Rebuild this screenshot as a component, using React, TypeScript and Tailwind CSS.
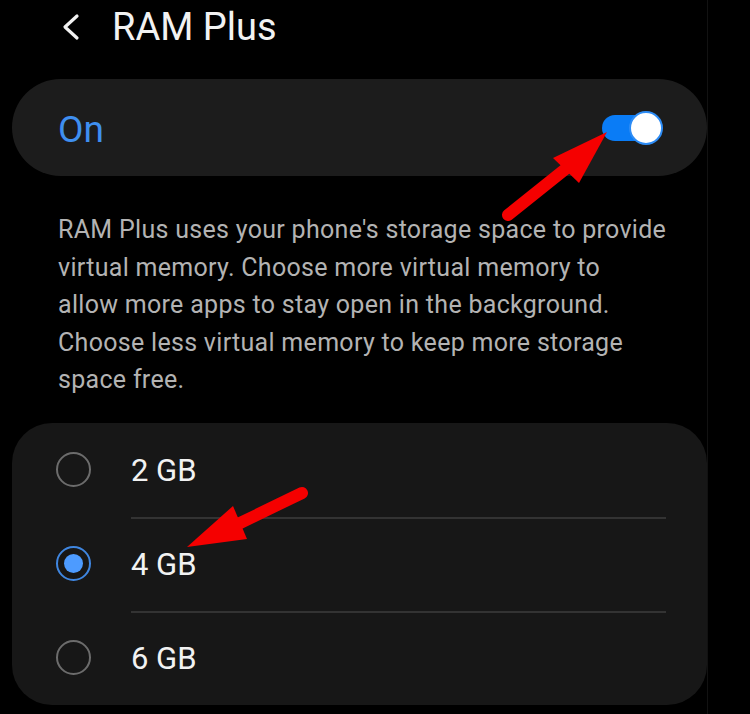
import React from "react";

const descLines = [
  "RAM Plus uses your phone's storage space to provide",
  "virtual memory. Choose more virtual memory to",
  "allow more apps to stay open in the background.",
  "Choose less virtual memory to keep more storage",
  "space free.",
];

const options = [
  { label: "2 GB", selected: false },
  { label: "4 GB", selected: true },
  { label: "6 GB", selected: false },
];

const Radio = ({ selected }: { selected: boolean }) =>
  selected ? (
    <div className="w-[35px] h-[35px] rounded-full border-2 border-[#3f86e0] flex items-center justify-center">
      <div className="w-[19px] h-[19px] rounded-full bg-[#4d9bff]" />
    </div>
  ) : (
    <div className="w-[35px] h-[35px] rounded-full border-2 border-[#6c6c6c]" />
  );

const App = () => {
  return (
    <main
      className="relative w-[750px] h-[714px] bg-black overflow-hidden"
      style={{ fontFamily: "Roboto, 'Noto Sans', sans-serif" }}
    >
      <div className="w-[708px] h-full border-r border-[#121212] pl-[12px]">
        {/* header */}
        <header className="flex items-center h-[52px] pt-[2px]">
          <svg width="20" height="28" viewBox="0 0 20 28" className="ml-[50px]">
            <path
              d="M15 3 L3 14 L15 25"
              fill="none"
              stroke="#f2f2f2"
              strokeWidth="3.2"
              strokeLinecap="round"
              strokeLinejoin="round"
            />
          </svg>
          <h1 className="ml-[30px] text-[38px] leading-none text-[#f2f2f2]">RAM Plus</h1>
        </header>

        {/* master switch */}
        <div className="mt-[27px] h-[97px] rounded-full bg-[#1c1c1c] flex items-center justify-between pl-[46px] pr-[44px]">
          <span className="text-[37px] leading-none text-[#3f8ff0] pt-[3px]">On</span>
          <div className="relative w-[61px] h-[34px]">
            <div className="absolute left-0 top-[4px] w-[48px] h-[26px] rounded-full bg-[#0a7cf6]" />
            <div className="absolute right-0 top-0 w-[34px] h-[34px] rounded-full bg-white border-[2px] border-[#2d8cf5]" />
          </div>
        </div>

        {/* description */}
        <p className="mt-[35px] pl-[46px] text-[25px] tracking-[0.3px] leading-[37.5px] text-[#b3b3b3]">
          {descLines.map((line) => (
            <span key={line} className="block whitespace-nowrap">
              {line}
            </span>
          ))}
        </p>

        {/* options */}
        <div className="mt-[24px] h-[282px] rounded-[40px] bg-[#171717]">
          {options.map((opt, i) => (
            <div key={opt.label} className="flex items-center h-[94px] pl-[44px]">
              <Radio selected={opt.selected} />
              <div
                className={
                  "ml-[40px] mr-[41px] flex-1 h-full flex items-center " +
                  (i > 0 ? "border-t-2 border-[#333333]" : "border-t-2 border-transparent")
                }
              >
                <span className="text-[31px] leading-none text-[#f2f2f2]">{opt.label}</span>
              </div>
            </div>
          ))}
        </div>
      </div>

      {/* red annotation arrows */}
      <svg
        className="absolute inset-0 pointer-events-none"
        width="750"
        height="714"
        viewBox="0 0 750 714"
      >
        <line x1="508" y1="215" x2="568" y2="167" stroke="#f50000" strokeWidth="12" strokeLinecap="round" />
        <polygon points="607,132 553,158 579,183" fill="#f50000" />
        <line x1="302" y1="493" x2="236" y2="525" stroke="#f50000" strokeWidth="12" strokeLinecap="round" />
        <polygon points="187,547 233,506 247,539" fill="#f50000" />
      </svg>
    </main>
  );
};

export default App;
